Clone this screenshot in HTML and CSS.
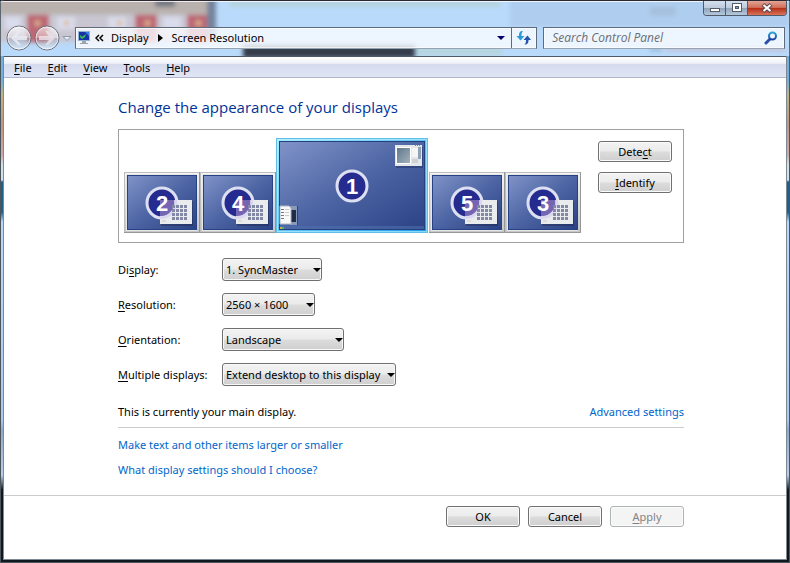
FILE: index.html
```html
<!DOCTYPE html>
<html lang="en">
<head>
<meta charset="utf-8">
<title>Screen Resolution</title>
<link rel="stylesheet" href="styles.css">
</head>
<body>
<svg class="defs" aria-hidden="true">
  <defs>
    <linearGradient id="desk" x1="0" y1="0" x2="1" y2="1">
      <stop offset="0" stop-color="#8093c8"/><stop offset=".5" stop-color="#4d65a4"/><stop offset="1" stop-color="#2b4285"/>
    </linearGradient>
    <linearGradient id="silver" x1="0" y1="0" x2="0" y2="1">
      <stop offset="0" stop-color="#f4f4f4"/><stop offset="1" stop-color="#c6c6c6"/>
    </linearGradient>
    <linearGradient id="glow" x1="0" y1="0" x2="1" y2="1">
      <stop offset="0" stop-color="#a6ecff"/><stop offset="1" stop-color="#1c9be8"/>
    </linearGradient>
    <linearGradient id="glassy" x1="0" y1="0" x2="1" y2="1">
      <stop offset="0" stop-color="#5f7587"/><stop offset="1" stop-color="#a3b4bf"/>
    </linearGradient>
    <linearGradient id="orb" x1="0" y1="0" x2="0" y2="1">
      <stop offset="0" stop-color="#fff" stop-opacity=".65"/><stop offset=".48" stop-color="#fff" stop-opacity=".35"/><stop offset=".52" stop-color="#8a8f9c" stop-opacity=".25"/><stop offset="1" stop-color="#fff" stop-opacity=".6"/>
    </linearGradient>
    <linearGradient id="lens" x1="0" y1="0" x2="0" y2="1">
      <stop offset="0" stop-color="#2fa3dc"/><stop offset="1" stop-color="#1d3e9c"/>
    </linearGradient>
    <symbol id="small-screen" viewBox="0 0 76 61">
      <rect x=".5" y=".5" width="75" height="60" fill="url(#silver)" stroke="#bdbdbd"/>
      <path d="M0 60.500H75.500V0" fill="none" stroke="#979797"/>
      <rect x="2" y="2" width="71" height="57" fill="#e6e6e6"/>
      <rect x="3" y="3" width="70" height="55" fill="#274284"/>
      <rect x="4" y="4" width="68" height="53" fill="url(#desk)"/>
      <circle cx="38" cy="31" r="15" fill="#262b8f" stroke="#dde0f1" stroke-width="3"/>
      <rect x="37" y="29" width="32" height="25" fill="#000" opacity=".22"/>
      <rect x="36" y="28" width="32" height="24" fill="#e9ebed"/>
      <path d="M36 28H51.500A15 15 0 0 1 38 44.500L36 44Z" fill="#7466b2"/>
      <path d="M51.500 28A15 15 0 0 1 36 45.500" fill="none" stroke="#dad8ee" stroke-width="3"/>
      <path d="M49.500 33v16M53.500 33v16M57.500 33v16M61.500 33v16" stroke="#8388a5" stroke-width="3" stroke-dasharray="3 1"/>
      <path d="M38 49h4" stroke="#ccc"/>
    </symbol>
  </defs>
</svg>
<div class="window">
  <header class="glass">
    <svg class="backdrop" viewBox="0 0 790 57" preserveAspectRatio="none" aria-hidden="true">
      <defs><filter id="soft" x="-5%" y="-50%" width="110%" height="200%"><feGaussianBlur stdDeviation="2"/></filter></defs>
      <rect width="790" height="57" fill="#b9dafb"/>
      <g filter="url(#soft)">
        <rect x="-5" y="-5" width="215" height="20" fill="#b9b1ad"/>
        <rect x="155" y="-2" width="20" height="9" fill="#777a83"/>
        <rect x="-5" y="15" width="215" height="28" fill="#c9c6d1"/>
        <path d="M27 15h22v28H27zM135 15h22v28H135zM187 15h20v28H187z" fill="#bd6873"/>
        <path d="M57 17h18v13H57zM108 17h18v13H108zM163 17h18v13H163zM5 17h16v13H5z" fill="#d9dcec"/>
        <path d="M64 21h5v5h-5zM117 21h5v5h-5zM35 21h5v5h-5zM145 21h5v5h-5zM196 21h5v5h-5z" fill="#ddb990"/>
        <rect x="207" y="-5" width="9" height="45" fill="#73849d"/>
        <path d="M230 1h270v6H230z" fill="#b5d3dc"/>
        <path d="M414 48h88v9h-88z" fill="#b6d5df"/>
        <path d="M510 0h280v27H510z" fill="#afcdee"/>
        <path d="M650 7h25v9h-25z" fill="#9cb7d1" opacity=".6"/>
        <path d="M665 49h120v3H665z" fill="#c5b8c9"/>
        <path d="M650 49h12v3h-12z" fill="#7995aa" opacity=".6"/>
      </g>
      <path d="M243 46h172v13H243z" fill="#343d4b" filter="url(#soft)"/>
      <path d="M0 .5h790" stroke="#242029"/><path d="M2 1.500h786" stroke="#fff" opacity=".8"/>
      <path d="M.5 0v57M789.500 0v57" stroke="#5c6670"/>
    </svg>
    <div class="caption">
      <button class="cap" aria-label="Minimize"><svg width="12" height="10"><rect x="1.500" y="5.500" width="9" height="3" fill="#fff" stroke="#545b68"/></svg></button>
      <button class="cap" aria-label="Maximize"><svg width="12" height="10"><rect x="1.500" y=".5" width="9" height="8" fill="#fff" stroke="#545b68"/><rect x="4.500" y="3.500" width="3" height="2" fill="#8395ae" stroke="#545b68"/></svg></button>
      <button class="cap close" aria-label="Close"><svg width="12" height="10"><path d="M2 1.500L10 8.500M10 1.500L2 8.500" stroke="#60464c" stroke-width="4"/><path d="M2.500 2L9.500 8M9.500 2L2.500 8" stroke="#fff" stroke-width="2"/></svg></button>
    </div>
    <nav class="nav">
      <div class="travel">
        <button aria-label="Back"><svg width="28" height="26" viewBox="0 0 28 26"><circle cx="14" cy="13" r="12" fill="url(#orb)" stroke="#696e7b"/><circle cx="14" cy="13" r="11" fill="none" stroke="#fff" opacity=".6"/><path d="M6 13l7-7h3l-4 5h10v4H12l4 5h-3z" fill="#e8eaf2" opacity=".85"/></svg></button>
        <button aria-label="Forward"><svg width="28" height="26" viewBox="0 0 28 26"><circle cx="14" cy="13" r="12" fill="url(#orb)" stroke="#696e7b"/><circle cx="14" cy="13" r="11" fill="none" stroke="#fff" opacity=".6"/><path d="M22 13l-7-7h-3l4 5H6v4h10l-4 5h3z" fill="#eadfe6" opacity=".85"/></svg></button>
        <button aria-label="Recent pages"><svg width="12" height="26" viewBox="0 0 12 26"><path d="M2 11.500h8L6 15.500z" fill="#e9edf6" stroke="#8c9aae"/></svg></button>
      </div>
      <div class="address">
        <svg width="14" height="14" viewBox="0 0 14 14" aria-hidden="true"><rect x="1" y="0" width="12" height="10" fill="#8fb4d8"/><rect x="2" y="1" width="10" height="8" fill="#1733a8"/><path d="M3 4l2 2 4-3-1 3-3 2-2-2z" fill="#3ec54a"/><path d="M8 1h4v4z" fill="#3b7fe0"/><path d="M5 10h4v2h2v1H3v-1h2z" fill="#a1a5aa"/></svg>
        <button class="crumb-more" aria-label="Parent folders"><svg width="9" height="8" viewBox="0 0 9 8"><path d="M4 1L1 4l3 3M8 1L5 4l3 3" fill="none" stroke="#000" stroke-width="1.500"/></svg></button>
        <a href="#display">Display</a>
        <svg class="crumb-arrow" width="5" height="8" aria-hidden="true"><path d="M0 0l5 4-5 4z"/></svg>
        <a href="#resolution">Screen Resolution</a>
        <button class="history" aria-label="Previous locations"><svg width="8" height="5"><path d="M0 0h8L4 4z" fill="#00006b"/></svg></button>
        <button class="refresh" aria-label="Refresh"><svg width="16" height="14" viewBox="0 0 16 14"><path d="M7 0C3.500 0 3 2 3 5H.5L4.500 9.500 8.500 5H5.500C5.500 3 5.500 1.500 7 0z" fill="#2b9ad6"/><path d="M8.500 13.500c3.500 0 4-2 4-4.500H15L11.500 4.500 7.500 9H10c0 2 0 3-1.500 4.500z" fill="#2455ac"/></svg></button>
      </div>
      <label class="search">
        <input type="search" placeholder="Search Control Panel" aria-label="Search Control Panel">
        <svg width="14" height="14" viewBox="0 0 14 14" aria-hidden="true"><path d="M6 8L2 12" stroke="#2850a8" stroke-width="3" stroke-linecap="round"/><circle cx="8.500" cy="5" r="3.500" fill="#eef7fd" stroke="url(#lens)" stroke-width="2"/></svg>
      </label>
    </nav>
  </header>
  <div class="client">
    <div class="menu">
      <button><u>F</u>ile</button><button><u>E</u>dit</button><button><u>V</u>iew</button><button><u>T</u>ools</button><button><u>H</u>elp</button>
    </div>
    <main>
      <h1>Change the appearance of your displays</h1>
      <section class="preview">
        <div class="screens">
          <svg class="screen" width="76" height="61" role="img" aria-label="Display 2"><use href="#small-screen"/><text x="38" y="39">2</text></svg>
          <svg class="screen" width="76" height="61" role="img" aria-label="Display 4"><use href="#small-screen"/><text x="38" y="39">4</text></svg>
          <svg class="screen primary" width="152" height="95" viewBox="0 0 152 95" role="img" aria-label="Display 1">
            <rect x=".5" y=".5" width="151" height="94" fill="url(#glow)" stroke="#5fbfe8"/>
            <rect x="1.500" y="1.500" width="149" height="92" fill="none" stroke="#b5efff" opacity=".7"/>
            <rect x="3" y="3" width="146" height="89" fill="#24407f"/>
            <rect x="4" y="4" width="144" height="87" fill="url(#desk)"/>
            <rect x="4" y="88" width="144" height="3" fill="#4f6eae" opacity=".6"/>
            <rect x="120" y="9" width="27" height="21" fill="#10204c" opacity=".35"/>
            <rect x="119" y="7" width="27" height="21" fill="#e3e6ea"/>
            <rect x="120.500" y="9.500" width="14" height="16" fill="url(#glassy)" stroke="#fff"/>
            <rect x="136" y="10" width="6" height="9" fill="#f5f5f5"/><rect x="142" y="9" width="3" height="12" fill="#91a1b5"/><rect x="136" y="21" width="6" height="4" fill="#cfd1d4"/><path d="M139 7.500h6" stroke="#7d8797" stroke-dasharray="1 1"/>
            <rect x="14" y="68" width="8" height="19" fill="#879ab9"/><rect x="15" y="72" width="5" height="12" fill="#202c45"/><path d="M21.500 68v19" stroke="#31456f"/>
            <path d="M4 68h9l2 2v16H4z" fill="#f9f9f9" stroke="#b2b8c5"/>
            <path d="M5 71.500h3M5 74.500h3M5 77.500h3M5 80.500h3" stroke="#778"/><path d="M9 71.500h4M9 74.500h4M9 77.500h4" stroke="#ccc"/>
            <path d="M4 89h2v2H4z" fill="#e8a634"/><path d="M6 89h2v2H6z" fill="#5ab94e"/>
            <circle cx="76" cy="48" r="15" fill="#262b8f" stroke="#dde0f1" stroke-width="3"/>
            <text x="76" y="56">1</text>
          </svg>
          <svg class="screen" width="76" height="61" role="img" aria-label="Display 5"><use href="#small-screen"/><text x="38" y="39">5</text></svg>
          <svg class="screen" width="76" height="61" role="img" aria-label="Display 3"><use href="#small-screen"/><text x="38" y="39">3</text></svg>
        </div>
        <div class="tools">
          <button class="btn">Dete<u>c</u>t</button>
          <button class="btn"><u>I</u>dentify</button>
        </div>
      </section>
      <form class="settings">
        <label for="display">Di<u>s</u>play:</label>
        <div class="pick pick-display"><select id="display"><option>1. SyncMaster</option></select></div>
        <label for="resolution"><u>R</u>esolution:</label>
        <div class="pick pick-resolution"><select id="resolution"><option>2560 × 1600</option></select></div>
        <label for="orientation"><u>O</u>rientation:</label>
        <div class="pick pick-orientation"><select id="orientation"><option>Landscape</option></select></div>
        <label for="multiple"><u>M</u>ultiple displays:</label>
        <div class="pick pick-multiple"><select id="multiple"><option>Extend desktop to this display</option></select></div>
      </form>
      <div class="status"><span>This is currently your main display.</span><a href="#advanced">Advanced settings</a></div>
      <div class="links">
        <a href="#text-size">Make text and other items larger or smaller</a>
        <a href="#help">What display settings should I choose?</a>
      </div>
    </main>
    <footer>
      <button class="btn">OK</button>
      <button class="btn">Cancel</button>
      <button class="btn" disabled><u>A</u>pply</button>
    </footer>
  </div>
</div>
</body>
</html>
```
FILE: styles.css
```css
* { box-sizing: border-box; }
body {
  margin: 0;
  background: #10191f;
  font: 11px/16px "Noto Sans", "Open Sans", sans-serif;
  color: #000;
}
button, input, select { font: inherit; color: inherit; margin: 0; }
button { padding: 0; border: 0; background: none; }
a { color: #0066cc; text-decoration: none; }
u { text-underline-offset: 2px; text-decoration-skip-ink: none; }
svg { display: block; flex: none; }
.defs { position: absolute; width: 0; height: 0; }

.window {
  display: flex;
  flex-direction: column;
  min-height: 100vh;
  box-shadow: inset 0 0 0 1px #4d565c;
  border-radius: 4px 4px 0 0;
  overflow: hidden;
  background: linear-gradient(#6fb1e2 80px, #c5b285 95px, #bf9783 125px, #cfaaa5 155px, #d0e2ec 165px, #d0e2ec 180px, #19618e 182px, #19618e 212px, #b9d8fa 222px, #a9c9ef 420px, #8fa9cc 430px, #b9d0ec 475px, #10191f 490px);
}
.glass { position: relative; padding: 25px 5px 5px; }
.backdrop { position: absolute; inset: 0; width: 100%; height: 100%; }

.caption {
  position: absolute;
  top: 1px;
  right: 3px;
  display: flex;
  height: 15px;
  border: 1px solid #505a68;
  border-top: 0;
  border-radius: 0 0 4px 4px;
  overflow: hidden;
}
.cap {
  display: grid;
  place-items: center;
  width: 22px;
  border-right: 1px solid #505a68;
  background: linear-gradient(#d3e0ee, #bccbdd 48%, #92a3b8 52%, #b4c8dd);
}
.close { width: 38px; border-right: 0; background: linear-gradient(#e3a595, #d0705b 46%, #b52f18 52%, #d9735a); }

.nav { position: relative; display: flex; align-items: center; height: 26px; }
.travel { display: flex; width: 70px; }
.address, .search {
  display: flex;
  align-items: center;
  height: 22px;
  border: 1px solid #5e6b7b;
  border-bottom-color: #96a3b0;
  box-shadow: inset 0 0 0 1px rgba(255, 255, 255, .6);
  background: rgba(250, 251, 255, .8);
}
.address { flex: 1 1 auto; padding-left: 1px; }
.address a { color: #000; }
.crumb-more { margin: 0 7px 0 4px; }
.crumb-arrow { margin: 0 9px; }
.history { margin-left: auto; padding: 0 6px; }
.refresh { display: grid; place-items: center; width: 25px; height: 20px; border-left: 1px solid #5e6b7b; }
.search { flex: 0 0 31%; margin-left: 6px; padding: 0 6px 0 8px; }
.search input { flex: 1; min-width: 0; padding: 0; border: 0; outline: 0; background: none; font: italic 12px/16px "Open Sans", sans-serif; }
.search input::placeholder { color: #6b6e74; }

.client {
  flex: 1;
  display: flex;
  flex-direction: column;
  margin: 0 4px 4px;
  background: #fff;
  box-shadow: 0 0 0 1px #7c8992;
}
.menu {
  display: flex;
  gap: 16px;
  height: 22px;
  padding: 0 10px;
  border-top: 1px solid #4e5967;
  border-bottom: 1px solid #b3b6cb;
  background: linear-gradient(#fff, #eef0f8 32%, #d5daed 36%, #e1e6f6);
}
.menu button { padding-top: 2px; }
main { flex: 1; padding: 19px 102px 16px 114px; }
h1 { margin: 0 0 12px; font: 15px/20px "Open Sans", sans-serif; color: #003399; }

.preview {
  display: flex;
  align-items: flex-start;
  justify-content: space-between;
  padding: 8px 11px 9px 5px;
  border: 1px solid #a0a0a0;
}
.screens { display: flex; align-items: flex-end; }
.primary { margin-right: 1px; }
.screen text { font: bold 22px "Liberation Sans", sans-serif; fill: #fff; text-anchor: middle; }
.tools { display: grid; gap: 10px; padding-top: 3px; }
.btn {
  width: 74px;
  height: 21px;
  border: 1px solid #707070;
  border-radius: 3px;
  box-shadow: inset 0 0 0 1px #fbfbfb;
  background: linear-gradient(#f3f3f3, #ebebeb 48%, #dcdcdc 52%, #cfcfcf);
  line-height: 19px;
}
.btn:disabled { border-color: #adb2b5; background: #f4f4f4; color: #838383; }

.settings {
  display: grid;
  grid-template-columns: 104px 1fr;
  align-items: center;
  row-gap: 12px;
  margin-top: 15px;
}
.pick { position: relative; height: 23px; }
.pick::after {
  content: "";
  position: absolute;
  top: 10px;
  right: 1px;
  border: 4px solid transparent;
  border-top-color: #000;
  border-bottom: 0;
  pointer-events: none;
}
.pick select {
  appearance: none;
  width: 100%;
  height: 100%;
  padding: 0 3px;
  border: 1px solid #707070;
  border-radius: 3px;
  box-shadow: inset 0 0 0 1px #f8f8f8;
  background: linear-gradient(#f3f3f3, #ebebeb 48%, #dcdcdc 52%, #cfcfcf);
}
.pick-display { width: 100px; }
.pick-resolution { width: 93px; }
.pick-orientation { width: 122px; }
.pick-multiple { width: 174px; }

.status {
  display: flex;
  justify-content: space-between;
  margin-top: 18px;
  padding-bottom: 7px;
  border-bottom: 1px solid #cccccc;
}
.links { display: grid; justify-items: start; gap: 9px; margin-top: 9px; }
footer {
  display: flex;
  justify-content: flex-end;
  gap: 8px;
  padding: 10px 102px 32px 0;
  border-top: 1px solid #cccccc;
}
```
